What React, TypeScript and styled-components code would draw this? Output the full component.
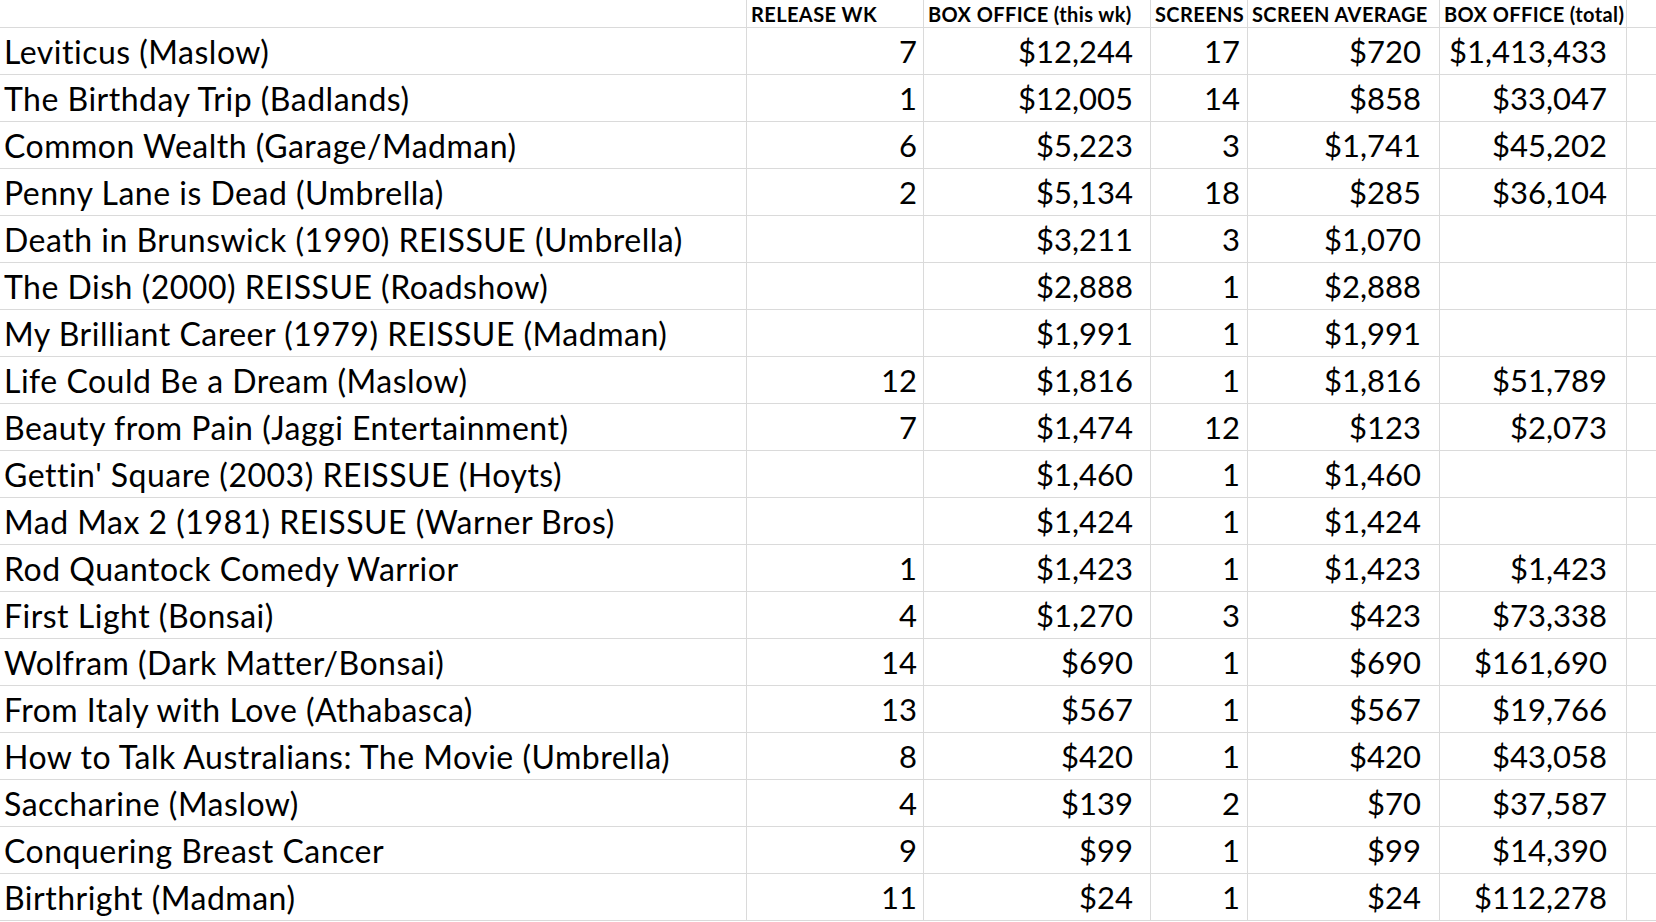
import React from "react";
import styled, { createGlobalStyle } from "styled-components";

const GlobalStyle = createGlobalStyle`
  html, body {
    margin: 0;
    padding: 0;
    background: #ffffff;
  }
  body {
    font-family: Lato, "Liberation Sans", sans-serif;
    color: #000;
  }
`;

type Row = {
  title: string;
  week?: string;
  boxWeek: string;
  screens: string;
  average: string;
  total?: string;
};

const rows: Row[] = [
  { title: "Leviticus (Maslow)", week: "7", boxWeek: "$12,244", screens: "17", average: "$720", total: "$1,413,433" },
  { title: "The Birthday Trip (Badlands)", week: "1", boxWeek: "$12,005", screens: "14", average: "$858", total: "$33,047" },
  { title: "Common Wealth (Garage/Madman)", week: "6", boxWeek: "$5,223", screens: "3", average: "$1,741", total: "$45,202" },
  { title: "Penny Lane is Dead (Umbrella)", week: "2", boxWeek: "$5,134", screens: "18", average: "$285", total: "$36,104" },
  { title: "Death in Brunswick (1990) REISSUE (Umbrella)", boxWeek: "$3,211", screens: "3", average: "$1,070" },
  { title: "The Dish (2000) REISSUE (Roadshow)", boxWeek: "$2,888", screens: "1", average: "$2,888" },
  { title: "My Brilliant Career (1979) REISSUE (Madman)", boxWeek: "$1,991", screens: "1", average: "$1,991" },
  { title: "Life Could Be a Dream (Maslow)", week: "12", boxWeek: "$1,816", screens: "1", average: "$1,816", total: "$51,789" },
  { title: "Beauty from Pain (Jaggi Entertainment)", week: "7", boxWeek: "$1,474", screens: "12", average: "$123", total: "$2,073" },
  { title: "Gettin' Square (2003) REISSUE (Hoyts)", boxWeek: "$1,460", screens: "1", average: "$1,460" },
  { title: "Mad Max 2 (1981) REISSUE (Warner Bros)", boxWeek: "$1,424", screens: "1", average: "$1,424" },
  { title: "Rod Quantock Comedy Warrior", week: "1", boxWeek: "$1,423", screens: "1", average: "$1,423", total: "$1,423" },
  { title: "First Light (Bonsai)", week: "4", boxWeek: "$1,270", screens: "3", average: "$423", total: "$73,338" },
  { title: "Wolfram (Dark Matter/Bonsai)", week: "14", boxWeek: "$690", screens: "1", average: "$690", total: "$161,690" },
  { title: "From Italy with Love (Athabasca)", week: "13", boxWeek: "$567", screens: "1", average: "$567", total: "$19,766" },
  { title: "How to Talk Australians: The Movie (Umbrella)", week: "8", boxWeek: "$420", screens: "1", average: "$420", total: "$43,058" },
  { title: "Saccharine (Maslow)", week: "4", boxWeek: "$139", screens: "2", average: "$70", total: "$37,587" },
  { title: "Conquering Breast Cancer", week: "9", boxWeek: "$99", screens: "1", average: "$99", total: "$14,390" },
  { title: "Birthright (Madman)", week: "11", boxWeek: "$24", screens: "1", average: "$24", total: "$112,278" },
];

const App = () => {
  return (
    <>
      <GlobalStyle />
      <Sheet>
        <HeadCell />
        <HeadCell>RELEASE WK</HeadCell>
        <HeadCell>BOX OFFICE (this wk)</HeadCell>
        <HeadCell>SCREENS</HeadCell>
        <HeadCell>SCREEN AVERAGE</HeadCell>
        <HeadCell>BOX OFFICE (total)</HeadCell>
        <HeadCell />
        {rows.map((r) => (
          <React.Fragment key={r.title}>
            <TitleCell>{r.title}</TitleCell>
            <NumCell $pad={6}>{r.week}</NumCell>
            <NumCell $pad={17}>{r.boxWeek}</NumCell>
            <NumCell $pad={7}>{r.screens}</NumCell>
            <NumCell $pad={18}>{r.average}</NumCell>
            <NumCell $pad={19}>{r.total}</NumCell>
            <Cell />
          </React.Fragment>
        ))}
      </Sheet>
    </>
  );
};

export default App;

const Sheet = styled.div`
  display: grid;
  grid-template-columns: 747px 177px 227px 97px 192px 187px 1fr;
  grid-template-rows: 28px repeat(19, 47px);
  width: 1656px;
  overflow: hidden;
`;
const Cell = styled.div`
  box-sizing: border-box;
  border-right: 1px solid #dadada;
  border-bottom: 1px solid #dadada;
  display: flex;
  align-items: center;
  font-size: 31px;
  white-space: nowrap;
  overflow: hidden;
  &:nth-child(7n) {
    border-right: none;
  }
`;
const HeadCell = styled(Cell)`
  font-size: 20px;
  font-weight: 700;
  padding-left: 4px;
  overflow: visible;
  letter-spacing: 0.4px;
`;
const TitleCell = styled(Cell)`
  padding-left: 4px;
  font-size: 32px;
  letter-spacing: 0.5px;
`;
const NumCell = styled(Cell)<{ $pad: number }>`
  justify-content: flex-end;
  padding-right: ${(p) => p.$pad}px;
`;
